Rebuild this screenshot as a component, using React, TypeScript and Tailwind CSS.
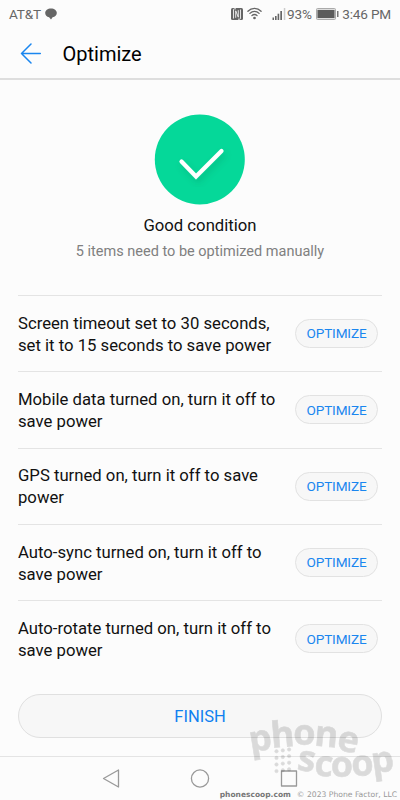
const ITEMS = [
  ['Screen timeout set to 30 seconds,', 'set it to 15 seconds to save power'],
  ['Mobile data turned on, turn it off to', 'save power'],
  ['GPS turned on, turn it off to save', 'power'],
  ['Auto-sync turned on, turn it off to', 'save power'],
  ['Auto-rotate turned on, turn it off to', 'save power'],
];

// Letter, centre x, baseline y, tilt in degrees
const LETTERS: [string, number, number, number][] = [
  ['p', 17, 50.5, -9],
  ['h', 38.5, 47, -5],
  ['o', 59.5, 45, 0],
  ['n', 80.5, 46.5, 5],
  ['e', 101.5, 51.5, 10],
  ['s', 60, 71, 9],
  ['c', 78, 76, 5],
  ['o', 97, 77, 0],
  ['o', 118, 75.5, -4],
  ['p', 139, 72, -8],
];

function StatusBar() {
  return (
    <div className="flex h-7 items-center pl-[9px] pr-[9px] text-[13.6px] tracking-[-0.18px] text-[#666]">
      <span>AT&amp;T</span>
      <svg className="ml-[4px] h-[12px] w-[12px]" viewBox="0 0 12 12" fill="#666">
        <path d="M6 .5C2.700.5.2 2.400.2 4.900c0 2 1.500 3.700 3.900 4.300L6 11.500l1.600-2.300c2.500-.5 4.200-2.200 4.200-4.300C11.800 2.400 9.300.5 6 .5Z" />
      </svg>
      <div className="ml-auto flex items-center">
        <svg className="h-[12px] w-[12px]" viewBox="0 0 12 12">
          <rect width="12" height="12" rx="1.500" fill="#666" />
          <path d="M5 .8H3.300Q2.500.8 2.500 1.800V10.500M7 11.200h1.700q.8 0 .8-1V1.500M4.700 9.800V2.800L7.300 9.200V2.200" fill="none" stroke="#fcfcfc" strokeWidth=".85" />
        </svg>
        <svg className="ml-[4px] h-[13px] w-[15px]" viewBox="0 0 15 13" fill="none" stroke="#666" strokeWidth="1.300" strokeLinecap="round">
          <path d="M.9 4.200C4.600.3 10.400.3 14.100 4.200M2.900 6.400c2.600-2.700 6.600-2.700 9.200 0M4.900 8.600c1.500-1.500 3.700-1.500 5.200 0" />
          <circle cx="7.500" cy="11" r=".7" fill="#666" />
        </svg>
        <svg className="ml-[9.5px] h-[12px] w-[14px]" viewBox="0 0 14 12" fill="#666">
          <rect x=".5" y="9.500" width="1.500" height="2.500" />
          <rect x="3" y="8" width="1.600" height="4" />
          <rect x="5.600" y="5.700" width="1.600" height="6.300" />
          <rect x="8.300" y="3" width="1.700" height="9" />
          <rect x="11.800" width="1.500" height="12" fill="#ccc" />
        </svg>
        <span className="ml-[1.5px]">93%</span>
        <svg className="ml-[4px] h-[12px] w-[23px]" viewBox="0 0 23 12">
          <rect x=".5" y=".5" width="19" height="11" rx="1" fill="#ddd" stroke="#aaa" />
          <rect x="1.500" y="2" width="17" height="8" fill="#5c5c5c" />
          <rect x="21" y="3" width="1.500" height="6" fill="#777" />
        </svg>
        <span className="ml-[3.5px]">3:46 PM</span>
      </div>
    </div>
  );
}

function Watermark() {
  return (
    <svg className="absolute left-[245px] top-[700px] h-[100px] w-[155px] overflow-visible" viewBox="0 0 155 100">
      <g opacity=".13" fill="#000" stroke="#000" strokeWidth=".6">
        {LETTERS.map(([ch, x, y, r], i) => (
          <text
            key={i}
            transform={`translate(${x} ${y}) rotate(${r})`}
            textAnchor="middle"
            className="font-['Open_Sans',sans-serif] text-[36px] font-bold"
          >
            {ch}
          </text>
        ))}
        {[0, 1, 2, 3].map((r) =>
          [0, 1, 2].map((c) => (
            <circle key={`${r}-${c}`} cx={31.5 + c * 6.3} cy={51.3 + r * 6.6 - c * 0.9} r="1.700" />
          )),
        )}
      </g>
    </svg>
  );
}

export default function App() {
  return (
    <div className="relative flex h-[800px] w-[400px] flex-col overflow-hidden bg-[#fcfcfc] font-[Roboto,sans-serif] text-[#111]">
      <StatusBar />
      <header className="flex h-[52px] items-center border-b-2 border-[#dedede] pl-[20px]">
        <svg className="h-[22px] w-[22px]" viewBox="0 0 22 22" fill="none" stroke="#1a86ef" strokeWidth="1.500" strokeLinecap="round" strokeLinejoin="round">
          <path d="M20.300 11.500H1.500M11 2 1.500 11.500l9.500 9.500" />
        </svg>
        <h1 className="ml-[20.5px] pt-[2px] text-[20px] leading-6 text-black">Optimize</h1>
      </header>

      <section className="flex h-[215px] flex-col items-center pt-[34px]">
        <svg className="h-[91px] w-[92px] shrink-0" viewBox="0 0 92 91">
          <defs>
            <filter id="tick-shadow" x="-30%" y="-30%" width="160%" height="170%">
              <feDropShadow dx="2" dy="4" stdDeviation="3" floodColor="#006040" floodOpacity=".22" />
            </filter>
          </defs>
          <circle cx="45.800" cy="45.500" r="45" fill="#05d899" />
          <path d="M27.500 47.500 42 62.500 67.500 37" fill="none" stroke="#fff" strokeWidth="4.200" strokeLinecap="round" filter="url(#tick-shadow)" />
        </svg>
        <p className="mt-[9px] text-[16.7px] leading-6">Good condition</p>
        <p className="mt-[4px] text-[14.5px] leading-5 text-[#808080]">5 items need to be optimized manually</p>
      </section>

      <ul className="mx-[18px]">
        {ITEMS.map(([a, b]) => (
          <li key={a} className="flex h-[76.300px] items-center justify-between border-t border-[#e4e4e4] pr-1">
            <p className="whitespace-nowrap pt-[2px] text-[16.7px] leading-[22px]">
              {a}
              <br />
              {b}
            </p>
            <button className="h-[29px] w-[83px] shrink-0 rounded-full border border-[#e2e2e2] bg-[#f7f7f7] text-[13.6px] tracking-[-0.15px] text-[#1a86ef]">
              OPTIMIZE
            </button>
          </li>
        ))}
      </ul>

      <button className="mx-[18px] mt-[17.5px] h-[44.5px] shrink-0 rounded-full border border-[#e0e0e0] bg-[#f7f7f7] pt-[2px] text-[16.500px] text-[#1080f0]">
        FINISH
      </button>

      <nav className="mt-auto flex h-[44px] items-start justify-center border-t border-[#e4e4e4] pt-[12px]">
        <svg className="h-[20px] w-[196px]" viewBox="0 0 196 20" fill="none" stroke="#999" strokeWidth="1.300" strokeLinejoin="round">
          <path d="M16.500 1 1.500 9.500 16.500 18Z" />
          <circle cx="98" cy="9.500" r="8.600" />
          <path d="M179.500 2h15v15h-15z" />
        </svg>
      </nav>

      <Watermark />
      <div className="absolute bottom-[0px] right-[3px] flex items-center whitespace-nowrap font-['DejaVu_Sans',sans-serif] text-[7.65px] leading-[11px] text-[#999]">
        <b className="mr-[6px] text-[7.5px] text-[#777]">phonescoop.com</b>
        <span>© 2023 Phone Factor, LLC</span>
      </div>
    </div>
  );
}
